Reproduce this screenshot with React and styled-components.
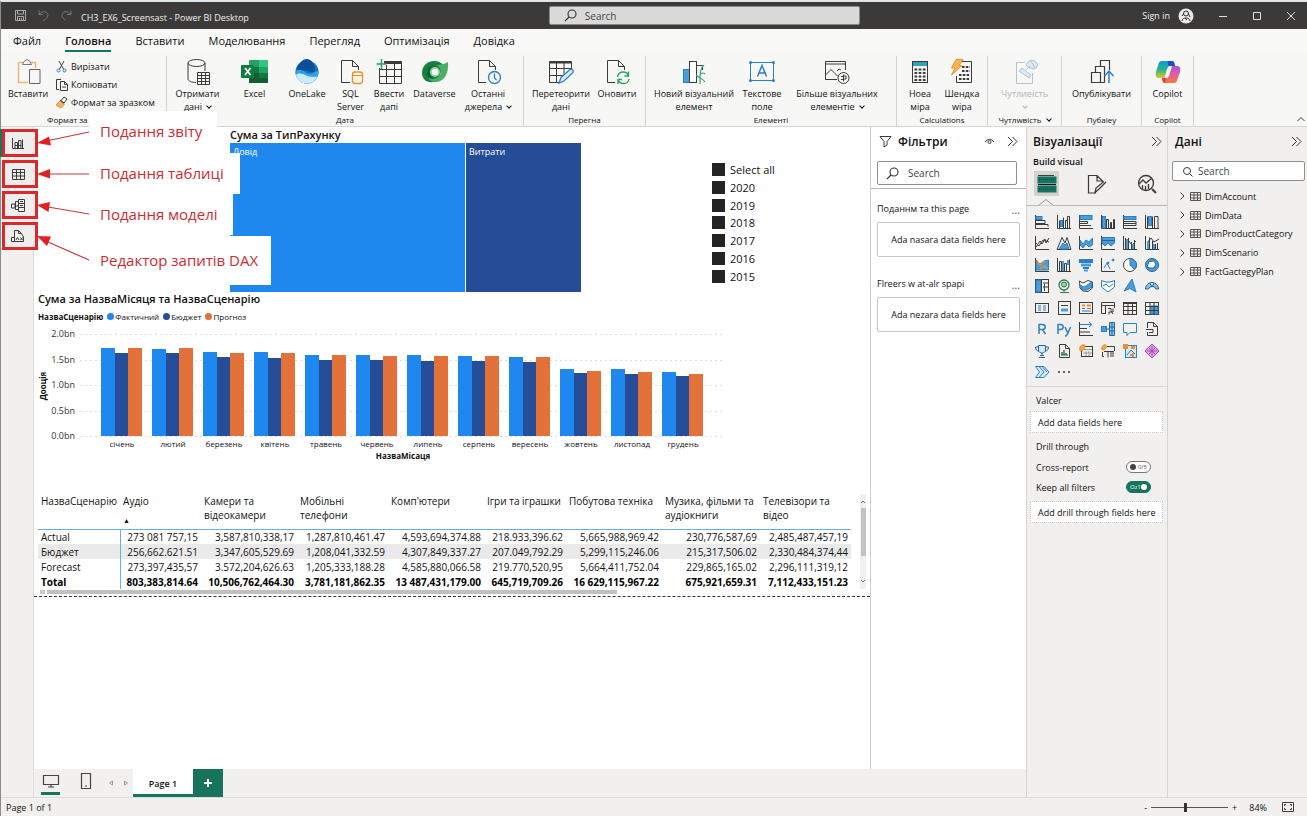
import React, { useState } from 'react'
import styled, { createGlobalStyle } from 'styled-components'

const GlobalStyle = createGlobalStyle`
   * {
      box-sizing: border-box;
   }
   body {
      margin: 0;
      font-family: 'Open Sans', 'Noto Sans', sans-serif;
      font-size: 10px;
      color: #111;
      background: #f1f0ef;
   }
   button, input {
      font-family: inherit;
      font-size: inherit;
      color: inherit;
   }
   button {
      border: 0;
      padding: 0;
      background: transparent;
      cursor: pointer;
   }
   svg {
      display: block;
      flex: none;
   }
`

const ink = '#3b3b3b'
const blue = '#2b7fc3'
const sky = '#4a9ddd'
const green = '#16735c'
const orange = '#e8912d'

const Svg = ({ size = 16, w, h, children, color = ink, sw = 1 }) => (
   <svg
      width={w || size}
      height={h || size}
      viewBox={`0 0 ${w || size} ${h || size}`}
      fill="none"
      stroke={color}
      strokeWidth={sw}
      aria-hidden="true"
   >
      {children}
   </svg>
)

const SearchIcon = ({ color = '#333' }) => (
   <Svg size={13} color={color} sw={1.1}>
      <circle cx="8" cy="5" r="4" />
      <path d="M5 8 L1 12" />
   </Svg>
)

const DoubleChevron = () => (
   <Svg size={11} color="#333">
      <path d="M1 1 L5.5 5.5 L1 10 M5.5 1 L10 5.5 L5.5 10" />
   </Svg>
)

const ribbonIcons = {
   paste: (
      <>
         <path d="M9 4.500H4.500V24.500H14" stroke="#eeb277" strokeWidth="1.400" />
         <path d="M17 4.500H21.500V10" stroke="#eeb277" strokeWidth="1.400" />
         <path d="M8.500 6.500L10 3.500L13 1.500L16 3.500L17.500 6.500Z" fill="#f6f6f5" stroke="#777" />
         <path d="M15.500 11.500H26V25.500H15.500Z" fill="#f6f6f5" stroke="#666" />
      </>
   ),
   database: (
      <>
         <ellipse cx="12.500" cy="5" rx="8.500" ry="3.500" />
         <path d="M4 5V21C4 23 8 24.500 12 24.500M21 5V13" />
         <path d="M13.500 14.500H25.500V26.500H13.500ZM13.500 17.500H25.500M13.500 20.500H25.500M13.500 23.500H25.500M17.500 14.500V26.500M21.500 14.500V26.500" fill="#f6f6f5" />
      </>
   ),
   excel: (
      <g stroke="none">
         <rect x="8" y="2" width="19" height="23" rx="1" fill="#21a366" />
         <rect x="18" y="2" width="9" height="7" fill="#33c481" />
         <rect x="8" y="9" width="10" height="6" fill="#107c41" />
         <rect x="8" y="15" width="19" height="10" fill="#185c37" />
         <rect x="18" y="15" width="9" height="5" fill="#107c41" />
         <rect x="0" y="7" width="13" height="13" rx="1" fill="#107c41" />
         <path d="M4 10L9.500 17M9.500 10L4 17" stroke="#fff" strokeWidth="1.700" />
      </g>
   ),
   onelake: (
      <g stroke="none">
         <circle cx="14" cy="14" r="11.500" fill="#1672c4" />
         <path d="M7 5C10 1 14 0 17 2C20 4 22 8 22 13C18 17 12 9 6 14C4 12 4 8 7 5Z" fill="#0c4f96" />
         <path d="M2.500 14C8 7 13 18 19 15.500C22 14.500 24 12 25.500 14C25.500 21 20 25.500 14 25.500S2.500 20 2.500 14Z" fill="#2fa3e6" />
         <path d="M3 17C9 12 13 21 24.500 18.500C22.500 23 18.500 25.500 14 25.500C8.500 25.500 4.500 22 3 17Z" fill="#c9ecf9" />
      </g>
   ),
   sql: (
      <>
         <path d="M13 24.500H4.500V2.500H15.500L21.500 8.500V12M15.500 2.500V8.500H21.500" />
         <rect x="15.500" y="14" width="10" height="11.500" rx="2.500" fill="#fdf3e4" stroke={orange} strokeWidth="1.300" />
         <path d="M15.500 17.500H25.500" stroke={orange} />
      </>
   ),
   enter: (
      <>
         <path d="M9 3.500H26.500V25.500H4.500V10" />
         <path d="M9 5H26" strokeWidth="2" />
         <path d="M4.500 11.500H26.500M4.500 18.500H26.500M11.500 7V25.500M19.500 5V25.500" />
         <path d="M6.500 1V11M1.500 6H11.500" stroke="#26a269" strokeWidth="1.500" />
      </>
   ),
   dataverse: (
      <g stroke="none">
         <path d="M1 15C1 8 6 3 13 3C17 3 20 4.500 22 7L18 20C15 24 11 24.500 8 24C4 23 1 20 1 15Z" fill="#17803f" />
         <path d="M27 4C27 4 27.500 8 26.500 13C25 20 20 24 15 24C11 24 8 22 7 19C11 22 17 21 19 17C21 12 18 8 15 7C19 7 24 6 27 4Z" fill="#4caf68" />
         <path d="M7 19C4 12 9 6 15 7C11 7 8.500 10 8.500 14C8.500 17 10 19.500 13 20.500C11 21 8.500 20.500 7 19Z" fill="#0c6330" />
         <circle cx="14" cy="14" r="5" fill="#8fd19c" />
         <circle cx="14" cy="14" r="3.200" fill="#f6f6f5" />
      </g>
   ),
   recent: (
      <>
         <path d="M12 24.500H4.500V2.500H15.500L21.500 8.500V12M15.500 2.500V8.500H21.500" />
         <circle cx="20.500" cy="19.500" r="6" fill="#f6f6f5" stroke={blue} strokeWidth="1.300" />
         <path d="M20.500 15.500V20L22.500 22" stroke={blue} strokeWidth="1.300" />
      </>
   ),
   transform: (
      <>
         <path d="M12 24.500H2.500V3.500H24.500V11" />
         <path d="M3 4.500H24" strokeWidth="2" />
         <path d="M2.500 10.500H24.500M2.500 17.500H16M9.500 5V24.500M17 5V16" />
         <path d="M12 25L14 19.500L23 11.500C25 10.500 27 12 26 14.500L17 23Z" fill="#dcebfa" stroke={blue} strokeWidth="1.300" />
      </>
   ),
   refresh: (
      <>
         <path d="M12 24.500H4.500V2.500H15.500L21.500 8.500V12M15.500 2.500V8.500H21.500" />
         <path d="M14.500 19C15 15.500 18 14 20.500 14C23 14 24.500 15.500 25.500 17.500M25.500 13.500V18H21.500M26 21C25.500 24 23 25.500 20.500 25.500C18 25.500 16 24 15 22M15 26V21.500H19" stroke="#2aa35a" strokeWidth="1.400" />
      </>
   ),
   visual: (
      <>
         <rect x="3.500" y="11.500" width="6" height="13" fill={sky} stroke={blue} />
         <rect x="9.500" y="3.500" width="7" height="21" fill="#fff" />
         <path d="M16.500 24.500V7.500H22.500V12" />
         <path d="M24 7C20 10 20 15 20 26M20 17C22 14 24 15 25 16M20 20L16 17M20 21C22 20 23 21 25 24" stroke="#3aa76d" strokeWidth="1.200" />
      </>
   ),
   textbox: (
      <>
         <rect x="2.500" y="4.500" width="23" height="18" stroke={blue} />
         <path d="M9.500 18.500L14 7.500L18.500 18.500M11 15H17" stroke={blue} strokeWidth="1.500" />
         <g fill={blue} stroke="none">
            <circle cx="2.500" cy="4.500" r="1.500" />
            <circle cx="25.500" cy="4.500" r="1.500" />
            <circle cx="2.500" cy="22.500" r="1.500" />
            <circle cx="25.500" cy="22.500" r="1.500" />
         </g>
      </>
   ),
   more: (
      <>
         <path d="M14 21.500H2.500V3.500H22.500V12M2.500 6H22.500M2.500 17L8 11.500L15 18.500M14 13L16 11L18 12" />
         <circle cx="20.500" cy="20" r="5.500" fill="#f6f6f5" />
         <path d="M20.500 16.500V23.500M18 18.500H20.500M18 21.500H20.500M20.500 18H23V21H20.500" />
      </>
   ),
   measure: (
      <>
         <rect x="6.500" y="3.500" width="15" height="21" />
         <rect x="7" y="4" width="14" height="4" fill="#2fa2bd" stroke="none" />
         <path d="M8.500 11.500H19.500M8.500 15H19.500M8.500 18.500H19.500M8.500 22H19.500" strokeWidth="2.200" strokeDasharray="2.700 1.450" />
      </>
   ),
   quick: (
      <>
         <path d="M12 3.500H23.500V24.500H8.500V18" />
         <path d="M14 9H22M14 13H22M11 17H22M11 21H22" strokeWidth="2.200" strokeDasharray="2.500 1.300" />
         <path d="M8 1.500H15L11 7.500H14L3.500 17L7 10H3.500Z" fill="#f9b552" stroke={orange} />
      </>
   ),
   sensitivity: (
      <g stroke="#a9c6d6">
         <path d="M14 4.500H5.500V25.500H21.500V15" />
         <path d="M17 4L20 2L24 3L27 7L24 11L19 10L15 7ZM8 13L11 10L20 17L18 20ZM14 13L19 8M20 3L24 10" fill="#dfe9ee" />
      </g>
   ),
   publish: (
      <>
         <path d="M3.500 14.500H12.500V24.500H3.500ZM7.500 14.500V8.500H16.500V24.500M12.500 8.500V2.500H21.500V12M12.500 24.500H16.500" strokeWidth="1.200" />
         <path d="M21 25V13M16.500 18L21 13L25.500 18" stroke={blue} strokeWidth="1.500" />
      </>
   ),
   copilot: (
      <g stroke="none">
         <defs>
            <linearGradient id="cpl" x1="0" y1="0" x2="0" y2="1">
               <stop offset="0" stopColor="#1595d8" />
               <stop offset="0.500" stopColor="#22b58c" />
               <stop offset="1" stopColor="#e8c22e" />
            </linearGradient>
            <linearGradient id="cpr" x1="0" y1="0" x2="0" y2="1">
               <stop offset="0" stopColor="#a15be0" />
               <stop offset="0.500" stopColor="#e85aa0" />
               <stop offset="1" stopColor="#f2783c" />
            </linearGradient>
         </defs>
         <path d="M8 3H18C20 3 20.500 5 21 8H16C14 8 13.500 10 12.500 13L10.500 20H5C2 20 1 18 2 14L4.500 6C5 4 6 3 8 3Z" fill="url(#cpl)" />
         <path d="M14 3H18C20 3 20.500 5 21 8H16C14 8 13.500 7 14 3Z" fill="#1f4fc4" />
         <path d="M18 8H23C26 8 27 10 26 14L23.500 21C23 23.500 22 25 20 25H11C9 25 8.500 23 8 20H12C14.500 20 15 18 16 15Z" fill="url(#cpr)" />
         <path d="M8 20H12L11 25C9 25 8.500 23 8 20Z" fill="#e0452e" />
      </g>
   ),
}

const ribbon = [
   {
      width: 357,
      label: 'Дата',
      items: [
         ['database', 61, 'Отримати', 'дані', true],
         ['excel', 53, 'Excel'],
         ['onelake', 52, 'OneLake'],
         ['sql', 35, 'SQL', 'Server'],
         ['enter', 42, 'Ввести', 'дапі'],
         ['dataverse', 49, 'Dataverse'],
         ['recent', 58, 'Останні', 'джерела', true],
      ],
   },
   {
      width: 122,
      label: 'Перегна',
      items: [
         ['transform', 74, 'Перетеорити', 'дані'],
         ['refresh', 38, 'Оновити'],
      ],
   },
   {
      width: 251,
      label: 'Елементі',
      items: [
         ['visual', 96, 'Новий візуальний', 'елемент'],
         ['textbox', 40, 'Текстове', 'поле'],
         ['more', 110, 'Більше візуальних', 'елементіе', true],
      ],
   },
   {
      width: 91,
      label: 'Calculations',
      items: [
         ['measure', 46, 'Ноеа', 'міра'],
         ['quick', 38, 'Шендка', 'wіра'],
      ],
   },
   {
      width: 74,
      label: 'Чутлwвість',
      more: true,
      items: [['sensitivity', 73, 'Чутлиеість', '', true, true]],
   },
   { width: 80, label: 'Пубаіеу', items: [['publish', 79, 'Опублікувати']] },
   { width: 52, label: 'Copilot', items: [['copilot', 51, 'Copilot']] },
]

const axis = <path d="M1.500 1V14.500H15" />
const b = { fill: sky, stroke: blue }

const visuals = [
   <>{axis}<rect x="2" y="2.500" width="6" height="3" {...b} /><path d="M2 6.500H11V9.500H2M2 10.500H14V12.500" /></>,
   <>{axis}<rect x="4.500" y="6.500" width="2" height="6" {...b} /><path d="M3.500 14V6.500M7.500 14V3.500M9.500 14V6.500H11.500V14M13.500 14V2.500H11.500V6" /></>,
   <>{axis}<rect x="2" y="1.500" width="12" height="4" {...b} /><path d="M2 7.500H9.500V9.500H2M2 11.500H13" /></>,
   <>{axis}<rect x="2.500" y="2.500" width="3" height="11.500" {...b} /><path d="M6.500 14V5.500H8.500V14M10.500 14V8.500H11.500V14M13.500 14V5.500H14.500V14" /></>,
   <>{axis}<rect x="2" y="2.500" width="12" height="3" {...b} /><path d="M2 7.500H14V11.500H2M2 9.500H14" /></>,
   <>{axis}<rect x="4.500" y="2.500" width="3" height="9" {...b} /><path d="M3.500 14V2.500M8.500 14V2.500M10.500 14V2.500H14V14" /></>,
   <>{axis}<path d="M2 12L6 6L8 9L11 4L12 8L15 3M2 8L5 11L9 5L12 6L15 7" /></>,
   <><path d="M1 14.500L6 2.500L9 8L11 2.500L15 14.500Z" /><path d="M3 14L7 8L9 10L11 8L13 14Z" {...b} /></>,
   <>{axis}<path d="M2 5L5 9L8 5L11 7L14.500 3V10L11 12L8 9L5 13L2 10Z" {...b} /></>,
   <>{axis}<path d="M2 2.500H14.500V8L11 11L8 8L5 11L2 8Z" {...b} /><path d="M2 5.500H14.500" stroke="#2b5f8c" /></>,
   <>{axis}<path d="M3.500 14V3M6.500 14V3M9.500 14V7M12.500 14V5M3 9L6 5L10 10L14 6" /><path d="M5 14V4M11 14V9" stroke={sky} strokeWidth="2" /></>,
   <>{axis}<path d="M5.500 14V2.500M8.500 14V6M11.500 14V9M13.500 14V8M3 8L7 3L10 7L15 4" /><path d="M4 14V6M10 14V9" stroke={sky} strokeWidth="2" /></>,
   <>{axis}<path d="M2 3L6 7L10 4L14.500 3V13H2Z" {...b} /><path d="M3 4L6 8L11 4M6 12L10 9L14 12" stroke={orange} strokeWidth="1.500" /></>,
   <>{axis}<path d="M3.500 14V4.500H5.500V14M8.500 14V6.500H10.500V14M13.500 14V2.500" /><path d="M7 4V14M12 3V8" stroke={sky} strokeWidth="2" /></>,
   <g stroke="none" fill={blue}><rect x="1" y="2" width="14" height="4" /><rect x="3" y="6.500" width="10" height="3" fill={sky} /><rect x="5" y="10" width="6" height="2" /><rect x="6" y="12.500" width="4" height="2" fill={sky} /></g>,
   <>{axis}<path d="M4 11L7 6L10 12" stroke={blue} /><circle cx="13" cy="3" r="1" {...b} /><circle cx="8" cy="6" r="1" {...b} /></>,
   <><circle cx="8" cy="8" r="6.500" fill="#fff" /><path d="M8 1.500V8L12.500 12.500A6.500 6.500 0 0 0 8 1.500Z" {...b} /></>,
   <><circle cx="8" cy="8" r="6.500" fill={sky} stroke="#29628f" /><path d="M3 10L5 4.500L10 4L12 7L10 11L6 11Z" fill="#fff" stroke="#29628f" /></>,
   <><rect x="1.500" y="1.500" width="13" height="13" /><rect x="2" y="2" width="5" height="12" {...b} /><path d="M9 5H14M9 9H14M10.500 6V13M7.500 2V14" /></>,
   <><circle cx="8" cy="7" r="5" stroke="#2f7d4c" strokeWidth="1.300" /><circle cx="8" cy="6.500" r="2.500" stroke="#2f7d4c" fill="#9ad0a8" /><path d="M4 14.500H13M8 12V14" stroke="#2f7d4c" /></>,
   <><path d="M1.500 3L5 5L10 2.500L14.500 4V10L10 13.500L5 13L2 10Z" fill="#fff" /><path d="M2 7L6 9L14 4V9L9 12L4 12Z" {...b} /></>,
   <><path d="M1.500 2.500L6 4L10 4L14.500 2.500V9L8 14L1.500 9Z" stroke={blue} fill="#fff" /><path d="M3 8L6 6L9 9L13 6" stroke={blue} /></>,
   <path d="M10 1L14 14L8 10.500L2 13Z" {...b} />,
   <path d="M1.500 11A6.500 6.500 0 0 1 14.500 11H12A4 4 0 0 0 4.500 11ZM6 5L8 9L10 5" stroke="#29628f" fill="#8cc4ea" />,
   <><rect x="1.500" y="3.500" width="13" height="9" /><path d="M4 6H7M4 8H7M4 10H7M9 6H12M9 8H12M9 10H12" stroke={blue} /></>,
   <><rect x="2.500" y="1.500" width="12" height="13" /><path d="M5 5.500H12" /><path d="M5 10H12" stroke={sky} strokeWidth="3" /></>,
   <><rect x="1.500" y="2.500" width="13" height="11" /><path d="M4 5.500H7M9 5.500H13" stroke={orange} strokeWidth="2" /><path d="M4 8.500H7M4 11H13" stroke={blue} /><path d="M9 8.500H13" stroke="#e05a2b" /></>,
   <><path d="M6 13.500H1.500V2.500H14.500V8M1.500 5.500H14.500M5.500 6V13" /><path d="M8 8.500H11V11L13 14M13 8.500V12H9V14.500" /></>,
   <><rect x="1.500" y="2.500" width="13" height="12" /><path d="M1.500 3H14.500" strokeWidth="2" /><path d="M1.500 6.500H14.500M1.500 10.500H14.500M6 3V14.500M10.500 3V14.500" /></>,
   <><rect x="1.500" y="2.500" width="13" height="12" /><rect x="7" y="6" width="7" height="8" {...b} /><path d="M2 6.500H14M2 10.500H14M6 3V14M10 3V14" /></>,
   <path d="M5 13V3.500H8.500C12 3.500 12 8.500 8.500 8.500H5M8.500 8.500L11.500 13" stroke={blue} strokeWidth="1.500" />,
   <path d="M2 13V3.500H4.500C8 3.500 8 8.500 4.500 8.500H2M9 6L11.500 11.500M14.500 6L11.500 13L10 15H9" stroke={blue} strokeWidth="1.500" />,
   <><path d="M1.500 1V15M1.500 14.500H15M2 7.500H9M2 11H12" /><path d="M2 3.500H13M11 1L14 3.500L11 6" stroke={blue} /></>,
   <><rect x="1.500" y="5.500" width="5" height="5" {...b} /><path d="M6.500 8H9M9.500 1.500H14.500V14.500H9.500ZM9.500 6H14.500M9.500 10H14.500M12 2V14" fill="#8cc4ea" stroke="#23679f" /></>,
   <path d="M1.500 2.500H14.500V11.500H8L5 14.500V11.500H1.500Z" stroke={blue} />,
   <><path d="M3.500 7V1.500H9.500L13.500 5.500V14.500H3.500V11M9.500 1.500V5.500H13.500" /><path d="M2 8.500H9M9 8.500V11.500H5" /></>,
   <path d="M4.500 2.500H11.500V7C11.500 11 4.500 11 4.500 7ZM4.500 4H1.500C1.500 7 3 8 5 8M11.500 4H14.500C14.500 7 13 8 11 8M8 10V13M5 14.500H11M6 12.500H10" stroke="#2a66a0" fill="#d6e8f7" />,
   <><path d="M3.500 1.500H9.500L13.500 5.500V14.500H3.500ZM9.500 1.500V5.500H13.500M5 12H12" /><path d="M6 12V9M8 12V7M10 12V10" stroke="#2f7d4c" strokeWidth="1.500" /></>,
   <><rect x="3.500" y="3.500" width="11" height="10" /><path d="M4 6.500H14M8 8V13M11 8V13M5 10H14" stroke="#9a9a9a" /><path d="M2 8C1 4 3 1 7 2C7 6 5 8 2 8Z" fill="#f4a650" stroke={orange} /></>,
   <><path d="M4 13.500H2.500V9M7 3.500H14.500V8M4 8.500H14M8 9V14.500M11 9V14M13 9V14" /><path d="M2 7C1 4 3 1 6 2C7 5 5 7 2 7Z" fill="#f4a650" stroke={orange} /></>,
   <><rect x="3.500" y="2.500" width="11" height="12" stroke={blue} fill="#d6e8f7" /><path d="M5 12L9 7L13 11" stroke={blue} /><rect x="1" y="1" width="5" height="5" fill={orange} stroke="none" /><rect x="9" y="3" width="4" height="3" fill={orange} stroke="none" /><path d="M11 10V14M8 12H12" stroke={orange} strokeWidth="2" /></>,
   <><path d="M8 1L15 8L8 15L1 8Z" fill="#e3a9e6" stroke="#a346ad" /><path d="M5 5L11 11M11 5L5 11M8 3V13M3 8H13" stroke="#a346ad" /></>,
   <path d="M1.500 2.500H10L15 8L10 13.500H1.500L5.500 8ZM5 2.500L10 8L5 13.500M8 2.500L13 8" stroke={blue} fill="#d6e8f7" />,
   <g fill="#333" stroke="none"><circle cx="3" cy="8" r="1" /><circle cx="8" cy="8" r="1" /><circle cx="13" cy="8" r="1" /></g>,
]

const months = [
   ['січень', 1.72, 1.62, 1.73],
   ['лютий', 1.71, 1.62, 1.72],
   ['березень', 1.64, 1.55, 1.63],
   ['квітень', 1.64, 1.52, 1.62],
   ['травень', 1.59, 1.49, 1.58],
   ['червень', 1.59, 1.49, 1.57],
   ['липень', 1.58, 1.48, 1.57],
   ['серпень', 1.57, 1.48, 1.57],
   ['вересень', 1.55, 1.45, 1.54],
   ['жовтень', 1.31, 1.23, 1.28],
   ['листопад', 1.31, 1.21, 1.26],
   ['грудень', 1.25, 1.17, 1.21],
]
const seriesColors = ['#1f88ee', '#254d98', '#e3723a']

const columns = [
   ['НазваСценарію', 82],
   ['Аудіо', 81],
   ['Камери та відеокамери', 96],
   ['Мобільні телефони', 91],
   ["Комп'ютери", 96],
   ['Ігри та іграшки', 82],
   ['Побутова техніка', 96],
   ['Музика, фільми та аудіокниги', 98],
   ['Телевізори та відео', 91],
]
const rows = [
   ['Actual', '273 081 757,15', '3,587,810,338,17', '1,287,810,461.47', '4,593,694,374.88', '218.933,396.62', '5,665,988,969.42', '230,776,587,69', '2,485,487,457,19'],
   ['Бюджет', '256,662.621.51', '3,347,605,529.69', '1,208,041,332.59', '4,307,849,337.27', '207.049,792.29', '5,299,115,246.06', '215,317,506.02', '2,330,484,374,44'],
   ['Forecast', '273,397,435,57', '3.572,204,626.63', '1,205,333,188.28', '4,585,880,066.58', '219.770,520,95', '5,664,411,752.04', '229,865,165.02', '2,296,111,319,12'],
   ['Total', '803,383,814.64', '10,506,762,464.30', '3,781,181,862.35', '13 487,431,179.00', '645,719,709.26', '16 629,115,967.22', '675,921,659.31', '7,112,433,151.23'],
]

const tabs = ['Файл', 'Головна', 'Вставити', 'Моделювання', 'Перегляд', 'Оптимізація', 'Довідка']
const slicer = ['Select all', '2020', '2019', '2018', '2017', '2016', '2015']
const tables = ['DimAccount', 'DimData', 'DimProductCategory', 'DimScenario', 'FactGactegyPlan']

const views = [
   {
      name: 'Подання звіту',
      icon: <path d="M2.500 2V12.500H14M5 12V6.500H7.500V12M8.500 12V4.500H11V12M12.500 12V3.500M5 9.500H11" />,
   },
   {
      name: 'Подання таблиці',
      icon: <path d="M2.500 2.500H14.500V12.500H2.500ZM2.500 5.500H14.500M2.500 9H14.500M6.500 2.500V12.500M10.500 2.500V12.500" />,
   },
   {
      name: 'Подання моделі',
      icon: <path d="M8.500 1.500H14.500V5.500H8.500ZM8.500 5.500H14.500V9.500H8.500ZM8.500 9.500H14.500V13.500H8.500ZM8 3.500H5.500V11.500H8M1.500 6H5V10H1.500ZM5 8H8M10 3.500H13M10 7.500H13" />,
   },
   {
      name: 'Редактор запитів DAX',
      icon: <path d="M4.500 8V1.500H8.500L11.500 4.500L13.500 8V12.500H1.500V8.500H4.500M8.500 1.500V4.500H11.500M4.500 8V12M6 11L7.500 8.500L9 11M10.500 8.500L12.500 11M12.500 8.500L10.500 11" />,
   },
]

const Visual = () => {
   const top = 8
   const unit = 51
   const zero = top + unit * 2
   return (
      <svg width="690" height="136" role="img" aria-label="Сума за НазваМісяця та НазваСценарію">
         {[2, 1.5, 1, 0.5, 0].map((v) => {
            const y = Math.round(zero - v * unit)
            return (
               <g key={v}>
                  <line x1="42" x2="684" y1={y + 0.5} y2={y + 0.5} stroke="#dedede" strokeDasharray="2 3" />
                  <AxisText x="37" y={y + 3} textAnchor="end">
                     {v.toFixed(1)}bn
                  </AxisText>
               </g>
            )
         })}
         {months.map(([name, ...values], i) => {
            const x = 63 + i * 51
            return (
               <g key={name}>
                  {values.map((v, n) => {
                     const h = Math.round(v * unit)
                     return (
                        <rect
                           key={n}
                           x={x + [0, 14, 27][n]}
                           y={zero - h}
                           width={[14, 13, 14][n]}
                           height={h}
                           fill={seriesColors[n]}
                        />
                     )
                  })}
                  <MonthText x={x + 21} y={zero + 11} textAnchor="middle">
                     {name}
                  </MonthText>
               </g>
            )
         })}
         <AxisTitle x="365" y={zero + 23} textAnchor="middle">
            НазваМісаця
         </AxisTitle>
         <AxisTitle x="8" y="60" textAnchor="middle" transform="rotate(-90 8 60)">
            Дооція
         </AxisTitle>
      </svg>
   )
}

const DataTable = () => (
   <TableFrame>
      <TableBody>
         <Matrix>
            <colgroup>
               {columns.map(([name, width]) => (
                  <col key={name} width={width} />
               ))}
            </colgroup>
            <thead>
               <tr>
                  {columns.map(([name], i) => (
                     <th key={name} scope="col">
                        {name}
                        {i === 1 && <SortMark>▲</SortMark>}
                     </th>
                  ))}
               </tr>
            </thead>
            <tbody>
               {rows.map(([name, ...cells]) => (
                  <tr key={name}>
                     <th scope="row">{name}</th>
                     {cells.map((cell) => (
                        <td key={cell}>{cell}</td>
                     ))}
                  </tr>
               ))}
            </tbody>
         </Matrix>
         <VScroll>
            <Svg size={6} color="#777"><path d="M1 4L3 2L5 4" /></Svg>
            <VThumb />
            <Svg size={6} color="#777"><path d="M1 2L3 4L5 2" /></Svg>
         </VScroll>
      </TableBody>
      <HScroll>
         <HEnd />
         <HThumb />
      </HScroll>
   </TableFrame>
)

const RibbonButton = ({ icon, width, line1, line2, arrow, disabled }) => (
   <BigButton $width={width} disabled={disabled}>
      <Svg size={28}>{ribbonIcons[icon]}</Svg>
      <span>{line1}</span>
      <span>
         {line2}
         {arrow && <Caret $gap={!!line2} />}
      </span>
   </BigButton>
)

export default function App() {
   const [checked, setChecked] = useState(slicer)
   const [keepAll, setKeepAll] = useState(true)
   const [cross, setCross] = useState(false)
   const [zoom, setZoom] = useState(84)

   const toggleYear = (year) =>
      setChecked(
         checked.includes(year)
            ? checked.filter((item) => item !== year)
            : [...checked, year]
      )

   return (
      <Window>
         <GlobalStyle />
         <TitleBar>
            <QuickAccess>
               <button aria-label="Зберегти">
                  <Svg size={13} color="#aaa"><path d="M1.500 1.500H11.500V11.500H1.500ZM3.500 1.500V5H9.500V1.500M3.500 11.500V7.500H9.500V11.500M5.500 9V11M7.500 9V11" /></Svg>
               </button>
               <button aria-label="Скасувати">
                  <Svg size={13} color="#777"><path d="M2 1.500V5.500H6M2.500 5C5 2 9 2 10.500 4.500C12 8 9 10 6 12" /></Svg>
               </button>
               <button aria-label="Повторити">
                  <Svg size={13} color="#777"><path d="M11 1.500V5.500H7M10.500 5C8 2 4 2 2.500 4.500C1 8 4 10 6 11.500" /></Svg>
               </button>
            </QuickAccess>
            <FileName>CH3_EX6_Screensast - Power BI Desktop</FileName>
            <TitleSearch>
               <SearchIcon />
               <input aria-label="Search" placeholder="Search" />
            </TitleSearch>
            <Account>
               <button>Sign in</button>
               <Svg size={16} color="#333"><circle cx="8" cy="8" r="7.500" fill="#e9e9e9" stroke="none" /><circle cx="8" cy="5.500" r="2.500" /><path d="M4 13C4 9 12 9 12 13M6 5L4 8M10 5L12 9M7 10L9 12" /></Svg>
            </Account>
            <WindowButtons>
               <button aria-label="Minimize"><Svg size={10} color="#ddd"><path d="M1 5.500H9" /></Svg></button>
               <button aria-label="Maximize"><Svg size={10} color="#ddd"><path d="M1.500 1.500H8.500V8.500H1.500Z" /></Svg></button>
               <button aria-label="Close"><Svg size={10} color="#ddd"><path d="M1 1L9 9M9 1L1 9" /></Svg></button>
            </WindowButtons>
         </TitleBar>

         <Tabs>
            {tabs.map((tab) => (
               <Tab key={tab} $active={tab === 'Головна'}>{tab}</Tab>
            ))}
         </Tabs>

         <Ribbon>
            <Group $width={166}>
               <GroupItems>
                  <RibbonButton icon="paste" width={54} line1="Вставити" />
                  <SmallStack>
                     <SmallButton>
                        <Svg size={13}><path d="M4 1L8.500 9M9 1L4.500 9" /><circle cx="3.500" cy="10.500" r="1.500" stroke={blue} /><circle cx="9.500" cy="10.500" r="1.500" stroke={blue} /></Svg>
                        Вирізати
                     </SmallButton>
                     <SmallButton>
                        <Svg size={13}><path d="M4 11.500H1.500V1.500H6M5.500 3.500H9.500L12.500 6.500V12.500H5.500ZM9.500 3.500V6.500H12.500M7 9H11" /></Svg>
                        Копіювати
                     </SmallButton>
                     <SmallButton>
                        <Svg size={13}><path d="M9 1L12 3L9 7L6 4.500ZM5 4L9.500 8" /><path d="M5 5L9 8.500L6 12L1 9Z" fill="#f4b26a" stroke={orange} /></Svg>
                        Формат за зразком
                     </SmallButton>
                  </SmallStack>
               </GroupItems>
               <GroupLabel $start>Формат за</GroupLabel>
            </Group>
            {ribbon.map((group) => (
               <Group key={group.label} $width={group.width}>
                  <GroupItems>
                     {group.items.map(([icon, width, line1, line2, arrow, disabled]) => (
                        <RibbonButton
                           key={icon}
                           icon={icon}
                           width={width}
                           line1={line1}
                           line2={line2}
                           arrow={arrow}
                           disabled={disabled}
                        />
                     ))}
                  </GroupItems>
                  <GroupLabel>
                     {group.label}
                     {group.more && <Caret $gap />}
                  </GroupLabel>
               </Group>
            ))}
            <Collapse aria-label="Collapse ribbon">
               <Svg size={8}><path d="M0.500 6L4 2.500L7.500 6" /></Svg>
            </Collapse>
         </Ribbon>

         <Main>
            <Rail>
               {views.map(({ name, icon }, i) => (
                  <RailButton key={name} aria-label={name} $active={i === 0}>
                     <Svg size={15}>{icon}</Svg>
                  </RailButton>
               ))}
            </Rail>

            <Stage>
               <Work>
                  <Canvas>
                     <TopRow>
                        <TreeVisual>
                           <VisualTitle $line={16}>Сума за ТипРахунку</VisualTitle>
                           <Treemap>
                              <Tile $color="#1f88ee" $share={237}>Довід</Tile>
                              <Tile $color="#254c97" $share={113}>Витрати</Tile>
                           </Treemap>
                        </TreeVisual>
                        <Slicer>
                           {slicer.map((year) => (
                              <label key={year}>
                                 <input
                                    type="checkbox"
                                    checked={checked.includes(year)}
                                    onChange={() => toggleYear(year)}
                                 />
                                 {year}
                              </label>
                           ))}
                        </Slicer>
                     </TopRow>

                     <ChartBlock>
                        <VisualTitle $line={14}>Сума за НазваМісяця та НазваСценарію</VisualTitle>
                        <Legend>
                           <b>НазваСценарію</b>
                           {['Фактичний', 'Бюджет', 'Прогноз'].map((name, i) => (
                              <LegendItem key={name} $color={seriesColors[i]}>{name}</LegendItem>
                           ))}
                        </Legend>
                        <Visual />
                     </ChartBlock>

                     <DataTable />
                  </Canvas>

                  <Filters>
                     <PaneHead>
                        <Svg size={13}><path d="M1 1.500H12L8 6.500V10L5 12V6.500Z" /></Svg>
                        <PaneTitle>Фільтри</PaneTitle>
                        <IconButton aria-label="Show filters"><Svg size={11}><path d="M1 6C3 2.500 8 2.500 10 6" /><circle cx="5.500" cy="6" r="1.500" /></Svg></IconButton>
                        <IconButton aria-label="Collapse filters"><DoubleChevron /></IconButton>
                     </PaneHead>
                     <FilterSearch>
                        <SearchIcon />
                        <input aria-label="Search filters" placeholder="Search" />
                     </FilterSearch>
                     <FilterBlock>
                        <FilterLabel>
                           Поданнм та this page
                           <button aria-label="More">…</button>
                        </FilterLabel>
                        <FilterDrop>Ada nasara data fields here</FilterDrop>
                     </FilterBlock>
                     <FilterBlock>
                        <FilterLabel>
                           Flreers w at-alr spapi
                           <button aria-label="More">…</button>
                        </FilterLabel>
                        <FilterDrop>Ada nezara data fields here</FilterDrop>
                     </FilterBlock>
                  </Filters>
               </Work>

               <PageBar>
                  <LayoutButton $active aria-label="Desktop layout">
                     <Svg size={18} color="#444" sw={1.2}><path d="M1.500 3.500H16.500V12.500H1.500ZM6 15H12M9 12.500V15" /></Svg>
                  </LayoutButton>
                  <LayoutButton aria-label="Mobile layout">
                     <Svg size={18} color="#444" sw={1.2}><path d="M4.500 1.500H13.500V16.500H4.500ZM8 14H10" /></Svg>
                  </LayoutButton>
                  <PageArrow aria-label="Previous page"><Svg size={6} color="#999"><path d="M4.500 1L1.500 3L4.500 5Z" /></Svg></PageArrow>
                  <PageArrow aria-label="Next page"><Svg size={6} color="#999"><path d="M1.500 1L4.500 3L1.500 5Z" /></Svg></PageArrow>
                  <PageTab>Page 1</PageTab>
                  <AddPage aria-label="Add page"><Svg size={10} color="#fff" sw={2}><path d="M5 1V9M1 5H9" /></Svg></AddPage>
               </PageBar>
            </Stage>

            <VizPane>
               <PaneHead>
                  <PaneTitle>Візуалізації</PaneTitle>
                  <IconButton aria-label="Collapse visualizations"><DoubleChevron /></IconButton>
               </PaneHead>
               <BuildLabel>Build visual</BuildLabel>
               <BuildModes>
                  <ModeButton $active aria-label="Build visual">
                     <Svg size={20}><path d="M1 1.500H17" /><g fill={green} stroke={green}><rect x="1" y="3" width="18" height="6" /><rect x="1" y="12" width="18" height="6" /></g><path d="M2 5.500H18M2 15H18" stroke="#0b4b3b" strokeDasharray="1 1" /><path d="M1 10.500H19" stroke="#111" /></Svg>
                  </ModeButton>
                  <ModeButton aria-label="Format visual">
                     <Svg size={20} sw={1.2}><path d="M9 19H1.500V1.500H10L15.500 7V8M10 1.500V7H15M19 8L12 15L8 18.500L9 14L17 7.500" /></Svg>
                  </ModeButton>
                  <ModeButton aria-label="Analytics">
                     <Svg size={20} sw={1.3}><circle cx="9" cy="9" r="7.500" /><path d="M15 15L19 19" strokeWidth="2" /><path d="M2 10L6 6L9 9L15 4M5.500 15V11M8.500 16V12M11.500 15V10" /></Svg>
                  </ModeButton>
               </BuildModes>
               <Notch>
                  <Svg w={16} h={7} color="#999"><path d="M0.500 6.500L8 0.500L15.500 6.500" fill="#f1f0ef" /></Svg>
               </Notch>
               <VizGrid>
                  {visuals.map((icon, i) => (
                     <button key={i} aria-label={`Visual ${i + 1}`}>
                        <Svg size={16}>{icon}</Svg>
                     </button>
                  ))}
               </VizGrid>
               <Fields>
                  <FieldLabel>Valcer</FieldLabel>
                  <DropField>Add data fields here</DropField>
                  <FieldLabel>Drill through</FieldLabel>
                  <SwitchRow>
                     Cross-report
                     <Switch $on={cross}>
                        <input type="checkbox" role="switch" checked={cross} onChange={() => setCross(!cross)} />
                        <Knob $on={cross} />
                        <span>0/5</span>
                     </Switch>
                  </SwitchRow>
                  <SwitchRow>
                     Keep all filters
                     <Switch $on={keepAll}>
                        <input type="checkbox" role="switch" checked={keepAll} onChange={() => setKeepAll(!keepAll)} />
                        <Knob $on={keepAll} />
                        <span>Oz1</span>
                     </Switch>
                  </SwitchRow>
                  <DropField>Add drill through fields here</DropField>
               </Fields>
            </VizPane>

            <DataPane>
               <PaneHead>
                  <PaneTitle>Дані</PaneTitle>
                  <IconButton aria-label="Collapse data"><DoubleChevron /></IconButton>
               </PaneHead>
               <DataSearch>
                  <Svg size={11}><circle cx="5" cy="5" r="3.500" /><path d="M7.500 7.500L10.500 10.500" /></Svg>
                  <input aria-label="Search data" placeholder="Search" />
               </DataSearch>
               <TableList>
                  {tables.map((name) => (
                     <TableItem key={name}>
                        <Svg size={8}><path d="M2.500 0.500L6 4L2.500 7.500" /></Svg>
                        <Svg size={11} color="#555"><path d="M0.500 1.500H10.500V9.500H0.500ZM0.500 4H10.500M0.500 7H10.500M4 1.500V9.500M7.500 1.500V9.500" /></Svg>
                        {name}
                     </TableItem>
                  ))}
               </TableList>
            </DataPane>
         </Main>

         <StatusBar>
            <span>Page 1 of 1</span>
            <ZoomBox>
               <button aria-label="Zoom out">-</button>
               <input
                  type="range"
                  aria-label="Zoom"
                  min="10"
                  max="174"
                  value={zoom}
                  onChange={(e) => setZoom(Number(e.target.value))}
               />
               <button aria-label="Zoom in">+</button>
               <output>{zoom}%</output>
               <button aria-label="Fit to page">
                  <Svg size={12}><path d="M0.500 1.500H11.500V10.500H0.500ZM2.500 5V3.500H4M8 3.500H9.500V5M9.500 7V8.500H8M4 8.500H2.500V7" /></Svg>
               </button>
            </ZoomBox>
         </StatusBar>

         <Notes>
            <Note $left={89} $top={111} $width={128} $height={42}>Подання звіту</Note>
            <Note $left={89} $top={153} $width={151} $height={41}>Подання таблиці</Note>
            <Note $left={89} $top={194} $width={144} $height={41}>Подання моделі</Note>
            <Note $left={89} $top={236} $width={182} $height={49}>Редактор запитів DAX</Note>
            <Svg w={90} h={290} color="#c1383a" sw={1.2}>
               <path d="M89 132L46 141M89 174H48M89 214L48 207M89 260L48 242" />
               <path d="M37 143L49 136.500L51 145.500ZM37 174L50 169V178.500ZM37 205L50 202L48.500 212ZM37 236L51 236.500L47 246Z" fill="#e02023" stroke="none" />
            </Svg>
         </Notes>
      </Window>
   )
}

const Window = styled.div`
   position: relative;
   display: flex;
   flex-direction: column;
   min-height: 100vh;
   border-left: 1px solid #8c8c8c;
   border-top: 2px solid #dfe5e8;
`
const TitleBar = styled.header`
   display: flex;
   align-items: center;
   height: 27px;
   padding-left: 13px;
   background: #3b3a39;
   color: #f0f0f0;
`
const QuickAccess = styled.div`
   display: flex;
   gap: 10px;
   width: 67px;
`
const FileName = styled.div`
   flex: 7 1 0;
   padding-top: 4px;
   font-size: 9px;
`
const TitleSearch = styled.div`
   display: flex;
   align-items: center;
   gap: 8px;
   width: 311px;
   height: 19px;
   padding-left: 14px;
   border: 1px solid #8a8a8a;
   border-radius: 2px;
   background: #dadad9;
   color: #333;

   input {
      flex: 1;
      border: 0;
      padding: 0;
      background: transparent;
      font-size: 10px;
      outline: 0;
   }
   input::placeholder {
      color: #444;
   }
`
const Account = styled.div`
   display: flex;
   flex: 5 1 0;
   justify-content: flex-end;
   align-items: center;
   gap: 8px;

   button {
      font-size: 9px;
   }
`
const WindowButtons = styled.div`
   display: flex;
   gap: 24px;
   padding: 0 11px 0 24px;
`
const Tabs = styled.nav`
   display: flex;
   gap: 24px;
   padding: 0 12px;
   background: #f8f8f7;
`
const Tab = styled.button`
   height: 23px;
   font-size: 11px;
   line-height: 24px;
   font-weight: ${({ $active }) => ($active ? 600 : 400)};
   border-bottom: 2px solid ${({ $active }) => ($active ? green : 'transparent')};
`
const Ribbon = styled.section`
   display: flex;
   height: 75px;
   padding-top: 4px;
   border-bottom: 1px solid #d6d6d5;
   background: #f7f7f6;
`
const Group = styled.div`
   display: flex;
   flex-direction: column;
   justify-content: space-between;
   width: ${({ $width }) => $width}px;
   border-right: 1px solid #d2d2d1;
`
const GroupItems = styled.div`
   display: flex;
`
const GroupLabel = styled.div`
   height: 13px;
   padding-left: ${({ $start }) => ($start ? 46 : 0)}px;
   font-size: 8px;
   line-height: 13px;
   text-align: ${({ $start }) => ($start ? 'left' : 'center')};
`
const BigButton = styled.button`
   display: flex;
   flex-direction: column;
   align-items: center;
   justify-content: flex-start;
   width: ${({ $width }) => $width}px;
   padding-top: 2px;
   font-size: 9px;
   line-height: 13px;
   white-space: nowrap;
   color: ${({ disabled }) => (disabled ? '#b3b3b3' : 'inherit')};

   svg {
      margin-bottom: 1px;
   }
`
const Caret = styled.i`
   display: inline-block;
   width: 4px;
   height: 4px;
   margin-left: ${({ $gap }) => ($gap ? 5 : 0)}px;
   border-right: 1px solid currentColor;
   border-bottom: 1px solid currentColor;
   transform: translateY(-2px) rotate(45deg);
`
const SmallStack = styled.div`
   display: flex;
   flex-direction: column;
   padding-top: 1px;
`
const SmallButton = styled.button`
   display: flex;
   align-items: center;
   gap: 3px;
   height: 18px;
   font-size: 9px;
   white-space: nowrap;
`
const Collapse = styled.button`
   align-self: flex-end;
   margin-left: auto;
   padding: 3px 2px;
`
const Main = styled.main`
   display: flex;
   flex: 1;
`
const Rail = styled.aside`
   display: flex;
   flex-direction: column;
   gap: 3px;
   width: 33px;
   padding: 2px 0 0 1px;
   border-right: 1px solid #dddddc;
   z-index: 1;
`
const RailButton = styled.button`
   display: flex;
   align-items: center;
   justify-content: center;
   width: 36px;
   height: 28px;
   padding-right: 5px;
   border: 3px solid #d8292c;
   background: #efeeed;
   box-shadow: ${({ $active }) => ($active ? `-2px 0 0 ${green}` : 'none')};
`
const Stage = styled.div`
   display: flex;
   flex-direction: column;
   flex: 1;
   min-width: 0;
`
const Work = styled.div`
   display: flex;
   flex: 1;
   background: #fff;
`
const Canvas = styled.div`
   flex: 1;
   min-width: 0;
`
const TopRow = styled.div`
   display: flex;
   justify-content: space-between;
   padding: 0 93px 0 196px;
`
const TreeVisual = styled.div`
   width: 351px;
`
const VisualTitle = styled.h2`
   margin: 0;
   font-size: 11px;
   line-height: ${({ $line }) => $line}px;
   font-weight: 600;
   color: #111;
`
const Treemap = styled.div`
   display: flex;
   gap: 1px;
   height: 149px;
`
const Tile = styled.div`
   flex: ${({ $share }) => $share};
   padding: 2px 3px;
   background: ${({ $color }) => $color};
   color: #fff;
   font-size: 9px;
`
const Slicer = styled.div`
   display: grid;
   grid-auto-rows: 1fr;
   width: 65px;
   height: 124px;
   margin-top: 34px;
   font-size: 11px;

   label {
      display: flex;
      align-items: center;
      gap: 5px;
      white-space: nowrap;
   }
   input {
      appearance: none;
      width: 13px;
      height: 13px;
      margin: 0;
      border: 1px solid #252423;
   }
   input:checked {
      background: #252423;
   }
`
const ChartBlock = styled.div`
   padding-left: 4px;
`
const Legend = styled.div`
   display: flex;
   align-items: center;
   gap: 4px;
   height: 20px;
   font-size: 8px;
`
const LegendItem = styled.span`
   display: flex;
   align-items: center;
   gap: 1px;

   &::before {
      content: '';
      width: 7px;
      height: 7px;
      border-radius: 50%;
      background: ${({ $color }) => $color};
   }
`
const AxisText = styled.text`
   fill: #333;
   font-size: 9px;
`
const MonthText = styled.text`
   fill: #111;
   font-size: 8px;
   font-weight: 500;
`
const AxisTitle = styled.text`
   fill: #111;
   font-size: 8px;
   font-weight: 700;
`
const TableFrame = styled.div`
   padding: 32px 4px 0 4px;
   border-bottom: 1px dashed #333;
`
const TableBody = styled.div`
   display: flex;
   gap: 9px;
`
const Matrix = styled.table`
   flex: 1;
   table-layout: fixed;
   border-collapse: collapse;

   th, td {
      height: 15px;
      padding: 0 3px;
      line-height: 14px;
      white-space: nowrap;
   }
   th {
      font-weight: 400;
      text-align: left;
   }
   td {
      text-align: right;
   }
   thead th {
      height: 35px;
      vertical-align: top;
      white-space: normal;
      border-bottom: 1px solid #65b1d8;
   }
   tbody th {
      border-right: 1px solid #65b1d8;
   }
   tbody tr:nth-child(2) {
      background: #ebeaea;
   }
   tbody tr:last-child > * {
      font-weight: 700;
      color: #000;
   }
`
const SortMark = styled.div`
   margin-top: 8px;
   font-size: 7px;
   line-height: 10px;
`
const VScroll = styled.div`
   display: flex;
   flex-direction: column;
   align-items: center;
   gap: 3px;
   width: 6px;
   padding: 5px 0;
   background: #f0f0f0;

   svg:last-child {
      margin-top: auto;
   }
`
const VThumb = styled.div`
   width: 5px;
   height: 48px;
   background: #c4c4c4;
`
const HScroll = styled.div`
   display: flex;
   gap: 2px;
   padding: 1px 0 2px 2px;
`
const HEnd = styled.div`
   width: 5px;
   height: 4px;
   background: #c8c8c8;
`
const HThumb = styled.div`
   width: 570px;
   height: 4px;
   background: #c0c0c0;
`
const Filters = styled.aside`
   width: 156px;
   border-left: 1px solid #cfcfce;
   padding: 0 6px;
`
const PaneHead = styled.div`
   display: flex;
   align-items: center;
   gap: 6px;
   height: 28px;
   padding: 0 2px;
`
const PaneTitle = styled.h2`
   flex: 1;
   margin: 0;
   font-size: 12px;
   font-weight: 600;
   color: #111;
`
const IconButton = styled.button`
   margin-left: 6px;
`
const SearchBox = styled.div`
   display: flex;
   align-items: center;
   border: 1px solid #8f8f8f;
   border-radius: 2px;
   background: #fff;

   input {
      flex: 1;
      width: 0;
      border: 0;
      padding: 0;
      background: transparent;
      outline: 0;
   }
   input::placeholder {
      color: #444;
   }
`
const FilterSearch = styled(SearchBox)`
   gap: 9px;
   height: 24px;
   margin: 6px 3px 3px 0;
   padding-left: 8px;
`
const FilterBlock = styled.div`
   padding-bottom: 16px;

   &:nth-of-type(3) {
      margin: 0 -6px;
      padding: 8px 6px 15px;
      border-top: 1px solid #b9b9b9;
   }
`
const FilterLabel = styled.div`
   display: flex;
   justify-content: space-between;
   height: 25px;
   font-size: 9px;
   line-height: 24px;

   button {
      color: #555;
      font-size: 11px;
      line-height: 12px;
   }
`
const FilterDrop = styled.button`
   width: 100%;
   height: 35px;
   border: 1px solid #c6c6c5;
   border-radius: 2px;
   background: #fff;
   white-space: nowrap;
   font-size: 9px;
`
const PageBar = styled.nav`
   display: flex;
   height: 28px;
   padding-left: 7px;
   background: #f1f0ef;
`
const LayoutButton = styled.button`
   display: flex;
   align-items: center;
   justify-content: center;
   width: 19px;
   margin: 0 16px 2px 0;
   border-bottom: 3px solid ${({ $active }) => ($active ? green : 'transparent')};

   & + & {
      margin-right: 8px;
   }
`
const PageArrow = styled.button`
   display: flex;
   align-items: center;
   justify-content: center;
   width: 15px;
`
const PageTab = styled.button`
   width: 60px;
   padding-top: 3px;
   background: #fff;
   border-bottom: 3px solid ${green};
   font-size: 9px;
   font-weight: 600;
`
const AddPage = styled.button`
   display: flex;
   align-items: center;
   justify-content: center;
   width: 30px;
   background: ${green};
`
const VizPane = styled.aside`
   width: 141px;
   border-left: 1px solid #d4d4d3;

   > ${PaneHead} {
      padding: 0 5px 0 6px;
   }
`
const BuildLabel = styled.div`
   padding: 1px 0 0 6px;
   font-size: 9px;
   line-height: 12px;
   font-weight: 600;
`
const BuildModes = styled.div`
   display: flex;
   gap: 25px;
   padding: 3px 0 0 7px;
`
const ModeButton = styled.button`
   display: flex;
   align-items: center;
   justify-content: center;
   width: 25px;
   height: 25px;
   background: ${({ $active }) => ($active ? '#d3d3d2' : 'transparent')};
`
const Notch = styled.div`
   height: 10px;
   padding: 3px 0 0 11px;
   border-bottom: 1px solid #b9b9b9;
`
const VizGrid = styled.div`
   display: grid;
   grid-template-columns: repeat(6, 22px);
   grid-template-rows: repeat(8, 1fr);
   height: 181px;
   padding: 5px 0 3px 4px;
   border-bottom: 1px solid #d8d8d7;

   button {
      display: flex;
      align-items: center;
      justify-content: center;
   }
`
const Fields = styled.div`
   display: flex;
   flex-direction: column;
   padding: 4px 4px 0 3px;
   font-size: 9px;
`
const FieldLabel = styled.div`
   padding-left: 6px;
   line-height: 20px;
`
const SwitchRow = styled.label`
   display: flex;
   align-items: center;
   justify-content: space-between;
   height: 20px;
   padding: 0 12px 0 6px;
`
const DropField = styled.button`
   height: 22px;
   margin-bottom: 4px;
   padding-left: 7px;
   border: 1px dotted #c9c9c8;
   background: #fff;
   font-size: 9px;
   text-align: left;
   white-space: nowrap;

   ${SwitchRow} + & {
      margin-top: 4px;
   }
`
const Switch = styled.span`
   display: flex;
   align-items: center;
   flex-direction: ${({ $on }) => ($on ? 'row-reverse' : 'row')};
   justify-content: space-between;
   width: 25px;
   height: 12px;
   padding: 0 3px;
   border: 1px solid ${({ $on }) => ($on ? green : '#777')};
   border-radius: 6px;
   background: ${({ $on }) => ($on ? green : '#fff')};
   color: ${({ $on }) => ($on ? '#fff' : '#555')};
   font-size: 6px;

   input {
      position: absolute;
      opacity: 0;
   }
`
const Knob = styled.i`
   flex: none;
   width: 6px;
   height: 6px;
   border-radius: 50%;
   background: ${({ $on }) => ($on ? '#fff' : '#444')};
`
const DataPane = styled.aside`
   width: 140px;
   border-left: 1px solid #d4d4d3;

   > ${PaneHead} {
      padding: 0 5px 0 7px;
   }
`
const DataSearch = styled(SearchBox)`
   gap: 5px;
   height: 20px;
   margin: 6px 2px 6px 4px;
   padding-left: 9px;
`
const TableList = styled.ul`
   display: grid;
   grid-auto-rows: 1fr;
   height: 94px;
   margin: 0;
   padding: 0 0 0 10px;
   list-style: none;
   font-size: 9px;
`
const TableItem = styled.li`
   display: flex;
   align-items: center;
   gap: 4px;
`
const StatusBar = styled.footer`
   display: flex;
   align-items: center;
   justify-content: space-between;
   height: 19px;
   padding: 0 13px 0 5px;
   border-top: 1px solid #dcdcdb;
   font-size: 9px;
`
const ZoomBox = styled.div`
   display: flex;
   align-items: center;
   gap: 4px;

   input {
      appearance: none;
      width: 77px;
      height: 1px;
      margin: 0;
      background: #555;
   }
   input::-webkit-slider-thumb {
      appearance: none;
      width: 3px;
      height: 9px;
      background: #333;
   }
   output {
      margin: 0 11px 0 8px;
   }
`
const Notes = styled.div`
   position: absolute;
   top: -2px;
   left: -1px;
   z-index: 2;
   pointer-events: none;
`
const Note = styled.div`
   position: absolute;
   left: ${({ $left }) => $left}px;
   top: ${({ $top }) => $top}px;
   width: ${({ $width }) => $width}px;
   height: ${({ $height }) => $height}px;
   display: flex;
   align-items: center;
   padding: 0 0 2px 11px;
   background: #fff;
   color: #cb2c31;
   font-size: 15px;
   white-space: nowrap;
`
